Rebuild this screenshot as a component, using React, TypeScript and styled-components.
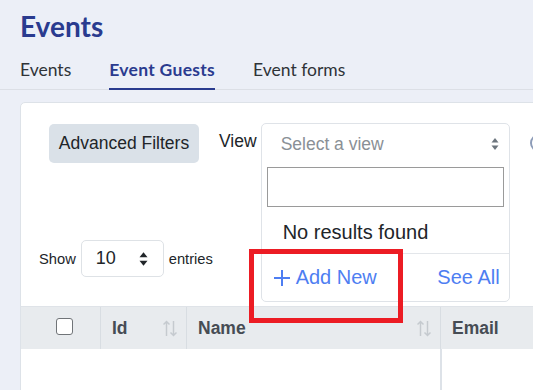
import styled, { createGlobalStyle } from "styled-components";

const GlobalStyle = createGlobalStyle`
  html, body {
    margin: 0;
    padding: 0;
    background: #eceff7;
    font-family: "Liberation Sans", Arial, sans-serif;
    overflow: hidden;
  }
`;

export default function App() {
  return (
    <>
      <GlobalStyle />
      <Page>
        <PageHeader>
          <Title>Events</Title>
          <Tabs>
            <Tab>Events</Tab>
            <Tab $active>Event Guests</Tab>
            <Tab>Event forms</Tab>
          </Tabs>
        </PageHeader>
        <Card>
          <Toolbar>
            <FilterButton>Advanced Filters</FilterButton>
            <ViewLabel>View</ViewLabel>
            <SelectWrap>
              <SelectPanel>
                <SelectHead>
                  <Placeholder>Select a view</Placeholder>
                  <Caret />
                </SelectHead>
                <SearchBox />
                <NoResults>No results found</NoResults>
                <PanelFooter>
                  <FooterLink>
                    <PlusIcon />
                    Add New
                  </FooterLink>
                  <FooterLink>See All</FooterLink>
                </PanelFooter>
              </SelectPanel>
            </SelectWrap>
            <EdgeIcon viewBox="0 0 20 20">
              <circle cx="10" cy="10" r="8" fill="none" stroke="#8d9cb8" strokeWidth="2" />
            </EdgeIcon>
          </Toolbar>
          <LengthRow>
            Show
            <LengthSelect>
              10
              <Caret $big />
            </LengthSelect>
            entries
          </LengthRow>
          <Table>
            <HeadRow>
              <HeadCell $w={80} $center>
                <Checkbox />
              </HeadCell>
              <HeadCell $w={86}>
                Id
                <SortIcon />
              </HeadCell>
              <HeadCell $w={254}>
                Name
                <SortIcon />
              </HeadCell>
              <HeadCell $w={200} $last>
                Email
              </HeadCell>
            </HeadRow>
            <BodyRow>
              <BodyCell $w={80} />
              <BodyCell $w={86} />
              <BodyCell $w={253} $line />
              <BodyCell $w={200} />
            </BodyRow>
          </Table>
        </Card>
        <Highlight />
      </Page>
    </>
  );
}

function Caret({ $big }: { $big?: boolean }) {
  const w = $big ? 11 : 8;
  const h = $big ? 16 : 14;
  return (
    <CaretSvg width={w} height={h} viewBox="0 0 8 14" $big={$big}>
      <path d="M4 1 L7.5 5.5 L0.5 5.5 Z" />
      <path d="M4 13 L7.5 8.5 L0.5 8.5 Z" />
    </CaretSvg>
  );
}

function PlusIcon() {
  return (
    <svg width="18" height="18" viewBox="0 0 18 18" style={{ marginRight: 5 }}>
      <path d="M9 1 V17 M1 9 H17" stroke="#4e7ef2" strokeWidth="2" fill="none" />
    </svg>
  );
}

function SortIcon() {
  return (
    <SortSvg width="14" height="17" viewBox="0 0 14 17">
      <path d="M3.5 16 V1.5 M0.5 4.5 L3.5 1.5 L6.5 4.5" />
      <path d="M10.5 1 V15.5 M7.5 12.5 L10.5 15.5 L13.5 12.5" />
    </SortSvg>
  );
}

const Page = styled.div`
  position: relative;
  width: 533px;
  height: 390px;
  overflow: hidden;
`;

const PageHeader = styled.div`
  padding: 10px 0 0 20px;
  border-bottom: 1px solid #dcdfe6;
`;

const Title = styled.h1`
  margin: 0;
  font-family: Lato, "Open Sans", sans-serif;
  font-weight: 700;
  font-size: 28px;
  line-height: 33px;
  color: #2a3b8f;
`;

const Tabs = styled.div`
  display: flex;
  gap: 38px;
  margin-top: 16px;
`;

const Tab = styled.div<{ $active?: boolean }>`
  font-family: Lato, "Open Sans", sans-serif;
  font-size: 17.5px;
  line-height: 22px;
  padding-bottom: 7px;
  margin-bottom: -1px;
  color: ${(p) => (p.$active ? "#2a3b8f" : "#2f3338")};
  font-weight: ${(p) => (p.$active ? 700 : 400)};
  letter-spacing: ${(p) => (p.$active ? "0.3px" : "0")};
  border-bottom: 2px solid ${(p) => (p.$active ? "#2a3b8f" : "transparent")};
`;

const Card = styled.div`
  margin: 12px -20px 0 20px;
  background: #fff;
  border: 1px solid #dde2e8;
  border-radius: 5px 5px 0 0;
  height: 320px;
`;

const Toolbar = styled.div`
  display: flex;
  align-items: flex-start;
  padding: 20px 0 0 28px;
  height: 40px;
`;

const FilterButton = styled.div`
  width: 150px;
  height: 39px;
  display: flex;
  align-items: center;
  justify-content: center;
  background: #dae1e8;
  border-radius: 5px;
  font-size: 17.5px;
  color: #212529;
  margin-top: 1px;
`;

const ViewLabel = styled.div`
  font-size: 17.5px;
  color: #212529;
  margin: 8px 4px 0 20px;
`;

const SelectWrap = styled.div`
  position: relative;
  width: 249px;
  height: 40px;
`;

const SelectPanel = styled.div`
  position: absolute;
  top: 0;
  left: 0;
  right: 0;
  z-index: 2;
  background: #fff;
  border: 1px solid #dfe3e8;
  border-radius: 5px;
  height: 179px;
  box-sizing: border-box;
  display: flex;
  flex-direction: column;
`;

const SelectHead = styled.div`
  height: 40px;
  display: flex;
  align-items: center;
  justify-content: space-between;
  padding: 0 10px 0 19px;
`;

const Placeholder = styled.span`
  font-size: 17.5px;
  color: #8a9096;
`;

const CaretSvg = styled.svg<{ $big?: boolean }>`
  fill: ${(p) => (p.$big ? "#212529" : "#6c757d")};
`;

const SearchBox = styled.div`
  margin: 3px 5px 0 5px;
  height: 40px;
  border: 1px solid #9a9a9a;
  box-sizing: border-box;
`;

const NoResults = styled.div`
  font-size: 20px;
  color: #212529;
  padding: 14px 0 0 21px;
  height: 32px;
`;

const PanelFooter = styled.div`
  border-top: 1px solid #e3e6ea;
  display: flex;
  align-items: center;
  justify-content: space-between;
  flex: 1;
  padding: 0 9px 0 11px;
`;

const FooterLink = styled.span`
  display: flex;
  align-items: center;
  font-size: 20px;
  color: #4e7ef2;
`;

const EdgeIcon = styled.svg`
  width: 20px;
  height: 20px;
  margin: 10px 0 0 19px;
  flex-shrink: 0;
`;

const LengthRow = styled.div`
  display: flex;
  align-items: center;
  gap: 5px;
  margin-top: 77px;
  padding-left: 18px;
  font-size: 14.7px;
  color: #212529;
`;

const LengthSelect = styled.div`
  width: 83px;
  height: 37px;
  box-sizing: border-box;
  border: 1px solid #dee2e6;
  border-radius: 5px;
  display: flex;
  align-items: center;
  justify-content: space-between;
  padding: 0 14px 0 14px;
  font-size: 18px;
`;

const Table = styled.div`
  margin-top: 29px;
  border-top: 1px solid #dfe3e8;
`;

const HeadRow = styled.div`
  display: flex;
  height: 42px;
  background: #e8ebee;
`;

const HeadCell = styled.div<{ $w: number; $center?: boolean; $last?: boolean }>`
  width: ${(p) => p.$w}px;
  flex-shrink: 0;
  box-sizing: border-box;
  display: flex;
  align-items: center;
  justify-content: ${(p) => (p.$center ? "center" : "space-between")};
  padding: 0 ${(p) => (p.$center ? 0 : 9)}px 0 ${(p) => (p.$center ? 8 : 11)}px;
  border-right: ${(p) => (p.$last ? "none" : "1px solid #d8dde2")};
  font-weight: 700;
  font-size: 17.5px;
  color: #464c54;
`;

const Checkbox = styled.span`
  width: 15px;
  height: 15px;
  border: 1.5px solid #707478;
  border-radius: 3px;
  background: #fff;
  margin-bottom: 4px;
`;

const SortSvg = styled.svg`
  fill: none;
  stroke: #c5cacf;
  stroke-width: 1.5;
`;

const BodyRow = styled.div`
  display: flex;
  height: 60px;
`;

const BodyCell = styled.div<{ $w: number; $line?: boolean }>`
  width: ${(p) => p.$w}px;
  flex-shrink: 0;
  border-right: ${(p) => (p.$line ? "2px solid #dde2e8" : "none")};
`;

const Highlight = styled.div`
  position: absolute;
  left: 249px;
  top: 249px;
  width: 154px;
  height: 74px;
  box-sizing: border-box;
  border: 5px solid #ec1c24;
  z-index: 5;
`;
